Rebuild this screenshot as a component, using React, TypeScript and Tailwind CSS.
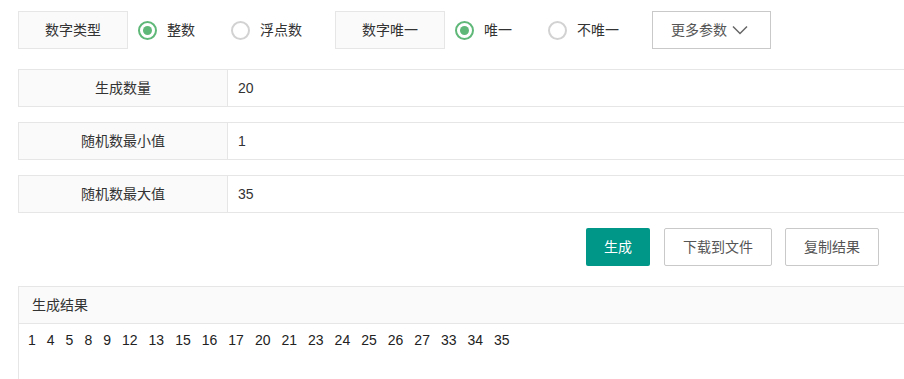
import React from 'react';

const font = { fontFamily: '"Liberation Sans", "Noto Sans CJK SC", sans-serif' };

const Radio: React.FC<{ label: string; checked?: boolean; last?: boolean }> = ({ label, checked, last }) => (
  <div className={`flex items-center ml-[10px] ${last ? 'mr-[33px]' : 'mr-[26px]'}`}>
    <span
      className={`w-[19px] h-[19px] rounded-full border-2 flex items-center justify-center ${
        checked ? 'border-[#5FB878]' : 'border-[#d2d2d2]'
      }`}
    >
      {checked && <span className="w-[9px] h-[9px] rounded-full bg-[#5FB878]" />}
    </span>
    <span className="ml-[10px] text-[14px] text-[#333]">{label}</span>
  </div>
);

const FieldRow: React.FC<{ label: string; value: string }> = ({ label, value }) => (
  <div className="flex h-[38px] w-[960px] border border-[#e6e6e6]">
    <div className="w-[209px] shrink-0 bg-[#fafafa] border-r border-[#e6e6e6] flex items-center justify-center text-[14px] text-[#333]">
      {label}
    </div>
    <div className="flex items-center pl-[10px] text-[14px] text-[#333]">{value}</div>
  </div>
);

const numbers = [1, 4, 5, 8, 9, 12, 13, 15, 16, 17, 20, 21, 23, 24, 25, 26, 27, 33, 34, 35];

export default function App() {
  return (
    <div className="h-screen w-screen overflow-hidden bg-white" style={font}>
      <div className="pl-[18px] pt-[11px]">
        {/* top options */}
        <div className="flex items-center h-[38px]">
          <div className="w-[110px] h-[38px] border border-[#e6e6e6] bg-[#fafafa] flex items-center justify-center text-[14px] text-[#333]">
            数字类型
          </div>
          <Radio label="整数" checked />
          <Radio label="浮点数" last />
          <div className="w-[110px] h-[38px] border border-[#e6e6e6] bg-[#fafafa] flex items-center justify-center text-[14px] text-[#333]">
            数字唯一
          </div>
          <Radio label="唯一" checked />
          <Radio label="不唯一" last />
          <button className="h-[38px] w-[119px] border border-[#c9c9c9] bg-white flex items-center pl-[18px] text-[14px] text-[#555]">
            更多参数
            <svg width="16" height="10" viewBox="0 0 16 10" className="ml-[5px]" fill="none">
              <path d="M1 1.5 L8 8.5 L15 1.5" stroke="#666" strokeWidth="1.5" />
            </svg>
          </button>
        </div>

        {/* fields */}
        <div className="flex flex-col gap-[15px] mt-[20px]">
          <FieldRow label="生成数量" value="20" />
          <FieldRow label="随机数最小值" value="1" />
          <FieldRow label="随机数最大值" value="35" />
        </div>

        {/* actions */}
        <div className="flex justify-end w-[861px] mt-[15px]">
          <button className="h-[38px] px-[18px] rounded-[2px] bg-[#009688] text-white text-[14px]">生成</button>
          <button className="h-[38px] px-[18px] ml-[14px] rounded-[2px] border border-[#c9c9c9] bg-white text-[#555] text-[14px]">
            下载到文件
          </button>
          <button className="h-[38px] px-[18px] ml-[13px] rounded-[2px] border border-[#c9c9c9] bg-white text-[#555] text-[14px]">
            复制结果
          </button>
        </div>

        {/* result */}
        <div className="mt-[20px] w-[960px] border border-[#e6e6e6]">
          <div className="h-[37px] bg-[#fafafa] border-b border-[#e6e6e6] flex items-center pl-[13px] text-[14px] text-[#333]">
            生成结果
          </div>
          <div className="h-[120px] pl-[9px] pt-[6px] flex flex-wrap content-start gap-x-[11px] text-[14px] leading-[20px] text-[#222]">
            {numbers.map((n) => (
              <span key={n}>{n}</span>
            ))}
          </div>
        </div>
      </div>
    </div>
  );
}
